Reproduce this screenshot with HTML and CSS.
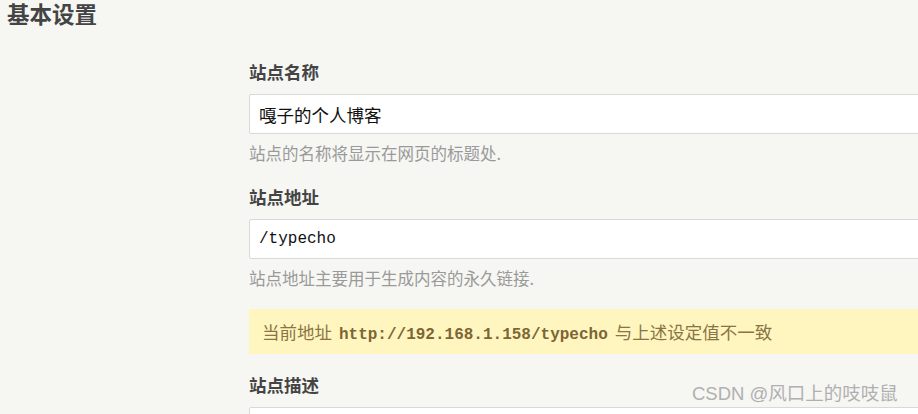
FILE: index.html
```html
<!DOCTYPE html>
<html lang="zh-CN">
<head>
<meta charset="utf-8">
<title>基本设置</title>
<link rel="stylesheet" href="styles.css">
</head>
<body>
<h2 class="page-title">基本设置</h2>
<div class="main">
  <div class="spacer"></div>
  <form class="form">
    <div class="option">
      <label class="label">站点名称</label>
      <input class="text" type="text" value="嘎子的个人博客">
      <p class="desc">站点的名称将显示在网页的标题处.</p>
    </div>
    <div class="option has-notice">
      <label class="label">站点地址</label>
      <input class="text mono" type="text" value="/typecho">
      <p class="desc">站点地址主要用于生成内容的永久链接.</p>
      <p class="notice">当前地址 <code>http://192.168.1.158/typecho</code> 与上述设定值不一致</p>
    </div>
    <div class="option">
      <label class="label">站点描述</label>
      <input class="text" type="text" value="">
    </div>
  </form>
</div>
<div class="watermark">CSDN @风口上的吱吱鼠</div>
</body>
</html>
```
FILE: styles.css
```css
html, body {
  margin: 0;
  padding: 0;
  overflow: hidden;
}
body {
  background: #f6f6f3;
  font-family: "Noto Sans CJK SC", "Noto Sans", sans-serif;
  color: #444;
  height: 414px;
  position: relative;
}
.page-title {
  margin: 0;
  padding: 1px 0 0 7px;
  font-size: 22.5px;
  line-height: 24px;
  font-weight: bold;
  color: #444;
}
.main {
  display: grid;
  grid-template-columns: 249px 720px;
  margin-top: 35px;
}
.form {
  margin: 0;
  display: flex;
  flex-direction: column;
  gap: 21px;
}
.option {
  display: flex;
  flex-direction: column;
}
.option.has-notice {
  margin-bottom: -2px;
}
.label {
  font-size: 17.5px;
  line-height: 24px;
  font-weight: bold;
  color: #444;
}
.text {
  margin-top: 10px;
  box-sizing: border-box;
  width: 100%;
  height: 40px;
  border: 1px solid #d9d9d6;
  border-radius: 2px;
  background: #fff;
  padding: 0 9px;
  font-family: "Noto Sans CJK SC", "Noto Sans", sans-serif;
  font-size: 17.5px;
  color: #111;
  outline: none;
}
.text.mono {
  font-family: "Liberation Mono", "DejaVu Sans Mono", monospace;
  font-size: 16px;
}
.desc {
  margin: 8px 0 0;
  font-size: 16.5px;
  line-height: 22px;
  color: #9a9a9a;
}
.notice {
  margin: 20px 0 0;
  height: 45px;
  box-sizing: border-box;
  padding: 0 13px;
  line-height: 45px;
  background: #fff6bf;
  color: #8a7444;
  font-size: 17.5px;
}
.notice code {
  margin: 0 3px;
  font-family: "Liberation Mono", "DejaVu Sans Mono", monospace;
  font-weight: bold;
  font-size: 16px;
  color: #7d6535;
}
.watermark {
  position: absolute;
  left: 692px;
  top: 382px;
  font-family: "Liberation Sans", "Noto Sans CJK SC", sans-serif;
  font-size: 18.5px;
  line-height: 24px;
  color: #b0b0b0;
  white-space: nowrap;
}
```
